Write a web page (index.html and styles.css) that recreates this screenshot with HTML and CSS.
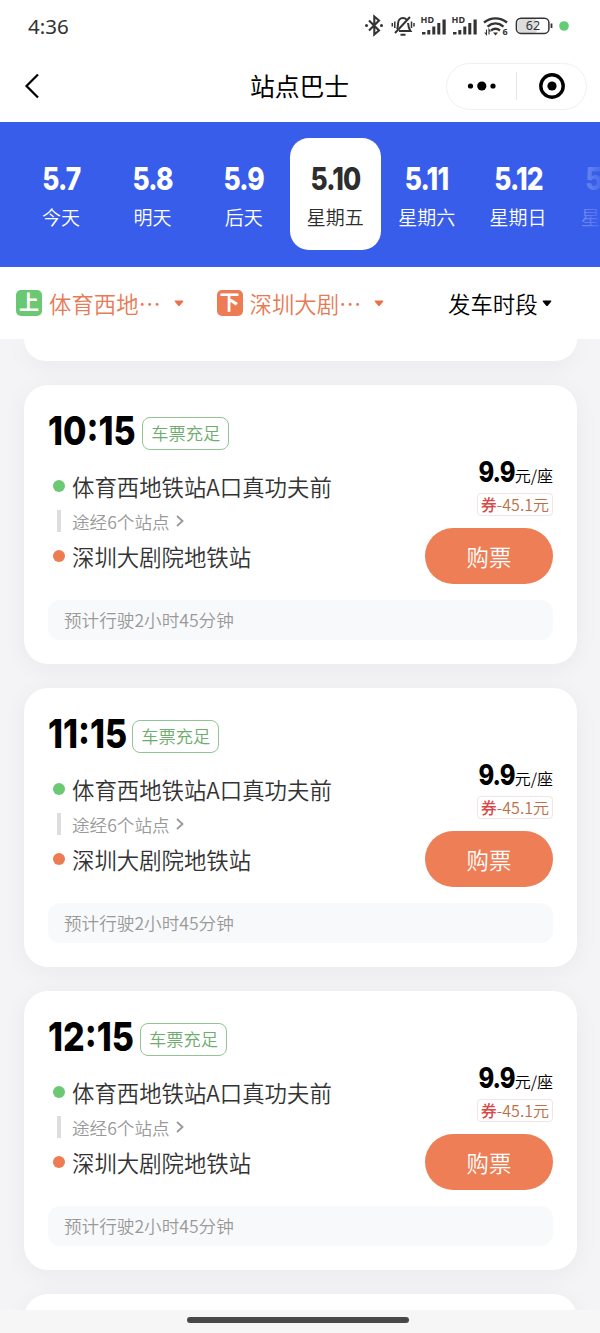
FILE: index.html
```html
<!DOCTYPE html>
<html lang="zh-CN">
<head>
    <meta charset="UTF-8">
    <meta name="viewport" content="width=device-width, initial-scale=1.0">
    <title>站点巴士</title>
    <link rel="stylesheet" href="styles.css">
</head>
<body>
    <div id="app">
        <div class="statusBar">
            <span class="clock">4:36</span>
            <svg class="statusIcons" width="206" height="28" viewBox="0 0 206 28">
                <!-- 蓝牙 -->
                <g fill="none" stroke="#333" stroke-width="2.1">
                    <path d="M5 8.500L15 18.500L10.300 22.500V4.500L15 8.500L5 18.500"/>
                </g>
                <circle cx="2.500" cy="13.500" r="1.500" fill="#333"/>
                <circle cx="17.500" cy="13.500" r="1.500" fill="#333"/>
                <!-- 静音 -->
                <g fill="none" stroke="#333" stroke-width="2">
                    <path d="M33 17c1-1.500 1-3 1-5c0-3.500 2-6 5-6c1.500 0 2.500.500 3.500 1.500M44 11c.3 4 .8 5.500 2.500 8H35"/>
                    <path d="M31 21L46 5M36.500 22.700h5"/>
                    <path d="M30.800 9.500v6.500M28.300 11v3.500M47.500 9.500v6.500M50 11v3.500" stroke-width="1.500"/>
                </g>
                <!-- 信号 -->
                <g fill="#333">
                    <text x="56.500" y="11" class="hd">HD</text>
                    <path d="M58 20h3.500v2.500H58zM63.300 18h3v4.500h-3zM68.300 14.500h3v8h-3zM73.300 11h3v11.500h-3zM78.500 7.500h3.200v15h-3.200z"/>
                    <text x="87.500" y="11" class="hd">HD</text>
                    <path d="M89 20h3.500v2.500H89zM94.300 18h3v4.500h-3zM99.300 14.500h3v8h-3zM104.300 11h3v11.500h-3zM109.500 7.500h3.200v15h-3.200z"/>
                </g>
                <!-- WiFi -->
                <g fill="none" stroke="#333" stroke-width="2.400">
                    <path d="M120 10.500c7-5.500 16-5.500 23 0M123.500 14.700c5-4.200 11-4.200 16 0M127 18.500c3-2.300 6-2.300 9 0"/>
                    <path d="M122.500 17.500v5l-1.800-2M125 22.500v-5l1.500 2" stroke-width="1.100"/>
                </g>
                <path d="M129 20.500h5l-2.500 3z" fill="#333"/>
                <text x="138.500" y="23.300" class="wifiNum">6</text>
                <!-- 电量 -->
                <rect x="154" y="7" width="19" height="14" rx="3" fill="#ddd"/>
                <rect x="152.400" y="6.200" width="32.500" height="15.200" rx="4.500" fill="none" stroke="#333" stroke-width="1.500"/>
                <path d="M187.500 11.500v4.500" stroke="#333" stroke-width="1.800"/>
                <text x="169" y="18.300" text-anchor="middle" class="battery">62</text>
                <circle cx="200" cy="14" r="4.800" fill="#62cd73"/>
            </svg>
        </div>

        <div class="navBar">
            <svg class="back" width="18" height="28" viewBox="0 0 18 28">
                <path d="M14 2.500L2.500 14L14 25.500" fill="none" stroke="#000" stroke-width="2.200"/>
            </svg>
            <h1>站点巴士</h1>
            <div class="capsule">
                <svg width="30" height="14" viewBox="0 0 30 14">
                    <circle cx="3.500" cy="7" r="2.600"/>
                    <circle cx="14.800" cy="7" r="4.600"/>
                    <circle cx="26" cy="7" r="2.600"/>
                </svg>
                <i></i>
                <svg width="28" height="28" viewBox="0 0 28 28">
                    <circle cx="14" cy="14" r="11.200" fill="none" stroke="#000" stroke-width="3.400"/>
                    <circle cx="14" cy="14" r="4.600"/>
                </svg>
            </div>
        </div>

        <div class="dateBar">
            <div class="date"><b>5.7</b><span>今天</span></div>
            <div class="date"><b>5.8</b><span>明天</span></div>
            <div class="date"><b>5.9</b><span>后天</span></div>
            <div class="date active"><b>5.10</b><span>星期五</span></div>
            <div class="date"><b>5.11</b><span>星期六</span></div>
            <div class="date"><b>5.12</b><span>星期日</span></div>
            <div class="date"><b>5.13</b><span>星期一</span></div>
        </div>

        <div class="filterBar">
            <div class="station">
                <span class="mark up">上</span>
                <span class="name">体育西地<em>⋯</em></span>
                <svg class="arrow" width="10" height="7" viewBox="0 0 10 7"><path d="M1.500 .5h7q1.500 0 .6 1.200L6 5.500q-1 1.200-2 0L.900 1.700Q0 .5 1.500 .5z"/></svg>
            </div>
            <div class="station">
                <span class="mark down">下</span>
                <span class="name">深圳大剧<em>⋯</em></span>
                <svg class="arrow" width="10" height="7" viewBox="0 0 10 7"><path d="M1.500 .5h7q1.500 0 .6 1.200L6 5.500q-1 1.200-2 0L.900 1.700Q0 .5 1.500 .5z"/></svg>
            </div>
            <div class="period">
                <span>发车时段</span>
                <svg width="10" height="7" viewBox="0 0 10 7"><path d="M1.500 .5h7q1.500 0 .6 1.200L6 5.500q-1 1.200-2 0L.900 1.700Q0 .5 1.500 .5z"/></svg>
            </div>
        </div>

        <div class="list">
            <div class="card cardPrev"></div>

            <div class="card">
                <div class="trip">
                    <div class="route">
                        <div class="head"><b class="time">10:15</b><span class="ticketTag">车票充足</span></div>
                        <div class="stop start">体育西地铁站A口真功夫前</div>
                        <div class="via">途经6个站点<svg width="8" height="12" viewBox="0 0 8 12"><path d="M1 1l5.500 5L1 11"/></svg></div>
                        <div class="stop end">深圳大剧院地铁站</div>
                    </div>
                    <div class="buy">
                        <div class="price"><b>9.9</b>元/座</div>
                        <div class="coupon"><span>券</span>-45.1元</div>
                        <button>购票</button>
                    </div>
                </div>
                <div class="duration">预计行驶2小时45分钟</div>
            </div>

            <div class="card">
                <div class="trip">
                    <div class="route">
                        <div class="head"><b class="time">11:15</b><span class="ticketTag">车票充足</span></div>
                        <div class="stop start">体育西地铁站A口真功夫前</div>
                        <div class="via">途经6个站点<svg width="8" height="12" viewBox="0 0 8 12"><path d="M1 1l5.500 5L1 11"/></svg></div>
                        <div class="stop end">深圳大剧院地铁站</div>
                    </div>
                    <div class="buy">
                        <div class="price"><b>9.9</b>元/座</div>
                        <div class="coupon"><span>券</span>-45.1元</div>
                        <button>购票</button>
                    </div>
                </div>
                <div class="duration">预计行驶2小时45分钟</div>
            </div>

            <div class="card">
                <div class="trip">
                    <div class="route">
                        <div class="head"><b class="time">12:15</b><span class="ticketTag">车票充足</span></div>
                        <div class="stop start">体育西地铁站A口真功夫前</div>
                        <div class="via">途经6个站点<svg width="8" height="12" viewBox="0 0 8 12"><path d="M1 1l5.500 5L1 11"/></svg></div>
                        <div class="stop end">深圳大剧院地铁站</div>
                    </div>
                    <div class="buy">
                        <div class="price"><b>9.9</b>元/座</div>
                        <div class="coupon"><span>券</span>-45.1元</div>
                        <button>购票</button>
                    </div>
                </div>
                <div class="duration">预计行驶2小时45分钟</div>
            </div>

            <div class="card cardNext"></div>
        </div>

        <div class="homeBar"><i></i></div>
    </div>
</body>
</html>
```
FILE: styles.css
```css
* {
    box-sizing: border-box;
}
body {
    margin: 0;
    font-family: "Noto Sans CJK SC", sans-serif;
    font-weight: 350;
    color: #000;
}
#app {
    display: flex;
    flex-direction: column;
    width: 600px;
    height: 1333px;
    overflow: hidden;
    background-color: #f4f4f6;
}

/* 状态栏 */
.statusBar {
    display: flex;
    flex: none;
    align-items: center;
    justify-content: space-between;
    height: 52px;
    padding: 0 30px 0 28px;
    background-color: #fff;
}
.clock {
    font-family: "Noto Sans", sans-serif;
    font-size: 20.5px;
    font-weight: 450;
    color: #333;
}
.hd {
    font: 700 9px "Noto Sans", sans-serif;
}
.wifiNum {
    font: 700 9px "Noto Sans", sans-serif;
    fill: #333;
}
.battery {
    font: 400 12.5px "Noto Sans", sans-serif;
    fill: #333;
}

/* 导航栏 */
.navBar {
    display: grid;
    flex: none;
    grid-template-columns: 1fr auto 1fr;
    align-items: center;
    height: 70px;
    padding: 0 13px 2px 24px;
    background-color: #fff;
}
.navBar h1 {
    margin: -2px 0 0 -12px;
    font-size: 24.8px;
    font-weight: 400;
}
.capsule {
    display: flex;
    justify-self: end;
    align-items: center;
    width: 141px;
    height: 47px;
    padding: 0 20px;
    border: 1px solid #f0f0f0;
    border-radius: 24px;
}
.capsule i {
    width: 1px;
    height: 28px;
    margin: 0 21px 0 19px;
    background-color: #e8e8e8;
}
.capsule svg {
    flex: none;
}

/* 日期 */
.dateBar {
    position: relative;
    display: flex;
    flex: none;
    height: 145px;
    padding: 16px 0 17px 15.4px;
    overflow: hidden;
    background-color: #375dea;
}
.dateBar::after {
    content: "";
    position: absolute;
    top: 0;
    right: 0;
    width: 28px;
    height: 100%;
    background: linear-gradient(to right, rgba(55, 93, 234, 0.6), rgba(55, 93, 234, 0.9));
}
.date {
    display: flex;
    flex: none;
    flex-direction: column;
    align-items: center;
    width: 91.4px;
    height: 112px;
    padding-top: 21px;
    border-radius: 19px;
    color: #fff;
}
.date b {
    height: 40px;
    font: 800 31px/40px Inter, sans-serif;
    letter-spacing: -1px;
    transform: scaleX(0.85);
}
.date span {
    font-size: 19px;
    line-height: 35px;
}
.date.active {
    background-color: #fff;
    color: #2d2d2d;
}

/* 筛选 */
.filterBar {
    display: flex;
    flex: none;
    align-items: center;
    height: 72px;
    padding-left: 16px;
    background-color: #fff;
    font-size: 22.4px;
}
.station {
    display: flex;
    align-items: center;
    width: 200.5px;
    color: #e77b56;
}
.mark {
    width: 26px;
    height: 26px;
    margin-right: 7px;
    border-radius: 5px;
    color: #fff;
    font-size: 20px;
    font-weight: 700;
    line-height: 24px;
    text-align: center;
}
.up {
    background-color: #6ac772;
}
.down {
    background-color: #ed7c55;
}
.name {
    display: flex;
}
.name em {
    width: 22.4px;
    font-style: normal;
    text-align: center;
}
.arrow {
    margin-left: 13px;
    fill: #e8714a;
}
.period {
    display: flex;
    gap: 4px;
    align-items: center;
    margin-left: 31px;
}

/* 班次列表 */
.list {
    display: flex;
    flex: 1;
    flex-direction: column;
    gap: 24px;
    min-height: 0;
    padding: 0 23px 0 24px;
    overflow: hidden;
}
.card {
    flex: none;
    height: 279px;
    padding: 24px;
    border-radius: 24px;
    background-color: #fff;
    box-shadow: 0 4px 24px rgba(40, 40, 70, 0.05);
}
.cardPrev {
    height: 22px;
    padding: 0;
    border-radius: 0 0 24px 24px;
}
.trip {
    display: flex;
    justify-content: space-between;
    align-items: flex-end;
    height: 175px;
}
.route {
    height: 100%;
}
.head {
    display: flex;
    align-items: center;
    height: 44px;
    margin-bottom: 15px;
}
.time {
    margin-right: -9px;
    font: 800 40px/44px Inter, sans-serif;
    transform: scaleX(0.85);
    transform-origin: left;
}
.ticketTag {
    height: 33px;
    margin-top: 4px;
    padding: 0 8px;
    border: 1px solid #93c493;
    border-radius: 8px;
    color: #6fad6f;
    font-size: 17.3px;
    line-height: 30px;
}
.stop {
    display: flex;
    align-items: center;
    height: 36px;
    padding-left: 5px;
    color: #333;
    font-size: 22.4px;
}
.stop::before {
    content: "";
    width: 12px;
    height: 12px;
    margin-right: 7px;
    border-radius: 50%;
    background-color: #6dc873;
}
.end::before {
    background-color: #ed7c52;
}
.via {
    display: flex;
    align-items: center;
    height: 34px;
    padding-left: 9px;
    color: #999;
    font-size: 17.6px;
}
.via::before {
    content: "";
    width: 4px;
    height: 22px;
    margin-right: 11px;
    background-color: #ddd;
}
.via svg {
    margin-left: 6px;
    fill: none;
    stroke: #999;
    stroke-width: 1.8;
}
.buy {
    display: flex;
    flex-direction: column;
    align-items: flex-end;
}
.price {
    font-size: 16px;
    line-height: 30px;
}
.price b {
    display: inline-block;
    font: 800 28px/30px Inter, sans-serif;
    letter-spacing: -1px;
    transform: scaleX(0.85);
    transform-origin: right;
}
.coupon {
    height: 23px;
    margin: 3px 0 12px;
    padding: 0 3px;
    border: 1px solid #f0e4e4;
    border-radius: 4px;
    color: #bd6f48;
    font-size: 16px;
    line-height: 20px;
}
.coupon span {
    color: #d94848;
    font-weight: 500;
}
.buy button {
    width: 128px;
    height: 56px;
    padding: 0;
    border: none;
    border-radius: 28px;
    background-color: #ed7e55;
    color: #fff;
    font: inherit;
    font-size: 22.4px;
}
.duration {
    height: 40px;
    margin-top: 16px;
    padding-left: 16px;
    border-radius: 12px;
    background-color: #f8f9fb;
    color: #999;
    font-size: 17.6px;
    line-height: 39px;
}

.homeBar {
    display: flex;
    flex: none;
    justify-content: center;
    height: 23px;
    padding-top: 7px;
    background-color: #f6f6f6;
}
.homeBar i {
    width: 222px;
    height: 6px;
    margin-right: 4px;
    border-radius: 3px;
    background-color: #484848;
}
```
